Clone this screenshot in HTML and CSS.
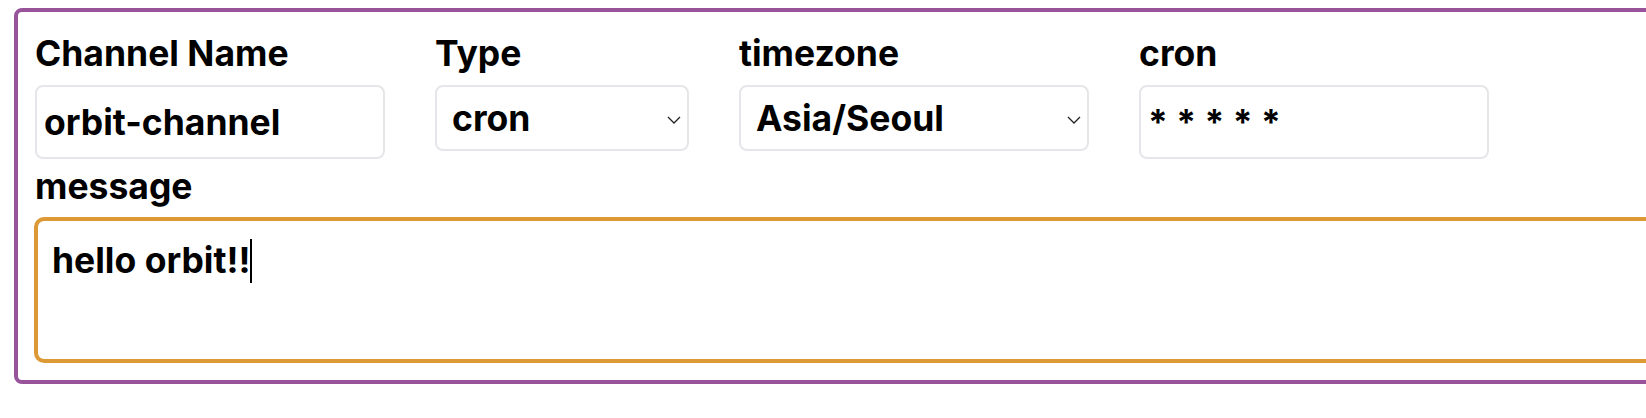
FILE: index.html
```html
<!DOCTYPE html>
<html lang="en">
<head>
<meta charset="utf-8">
<title>Channel form</title>
<link rel="stylesheet" href="styles.css">
</head>
<body>
<form class="card">
  <div class="row">
    <div class="field">
      <label class="label" for="name">Channel Name</label>
      <input class="input" id="name" type="text" value="orbit-channel">
    </div>
    <div class="field">
      <label class="label" for="type">Type</label>
      <div class="select-wrap select-type">
        <select class="select" id="type"><option>cron</option></select>
        <svg class="chevron" viewBox="0 0 14 8" width="14" height="8"><path d="M1 1 L7 7 L13 1" fill="none" stroke="#222" stroke-width="1.3"/></svg>
      </div>
    </div>
    <div class="field">
      <label class="label" for="tz">timezone</label>
      <div class="select-wrap select-tz">
        <select class="select" id="tz"><option>Asia/Seoul</option></select>
        <svg class="chevron" viewBox="0 0 14 8" width="14" height="8"><path d="M1 1 L7 7 L13 1" fill="none" stroke="#222" stroke-width="1.3"/></svg>
      </div>
    </div>
    <div class="field">
      <label class="label" for="cron">cron</label>
      <input class="input" id="cron" type="text" value="* * * * *">
    </div>
  </div>
  <div class="field field-message">
    <label class="label">message</label>
    <div class="textarea"><span class="msg">hello orbit!!</span><span class="caret"></span></div>
  </div>
</form>
</body>
</html>
```

FILE: styles.css
```css
html, body {
  margin: 0;
  padding: 0;
  background: #ffffff;
  overflow: hidden;
}
body {
  font-family: Inter, "Liberation Sans", sans-serif;
  color: #000;
}
.card {
  box-sizing: border-box;
  width: 1700px;
  margin: 8px 0 0 14px;
  border: 4px solid #97549a;
  border-radius: 8px;
  padding: 21px 0 17px 17px;
}
.row {
  display: flex;
  gap: 50px;
  align-items: flex-start;
}
.field {
  display: flex;
  flex-direction: column;
}
.label {
  font-size: 35.5px;
  font-weight: 700;
  line-height: 42px;
  margin-bottom: 10px;
}
.input {
  box-sizing: border-box;
  height: 74px;
  width: 350px;
  border: 2px solid #e6e6ea;
  border-radius: 8px;
  padding: 0 0 0 7px;
  font-family: Inter, "Liberation Sans", sans-serif;
  font-size: 35.5px;
  font-weight: 700;
  color: #000;
  outline: none;
}
.select-wrap {
  position: relative;
}
.select-type { width: 254px; }
.select-tz { width: 350px; }
.select {
  box-sizing: border-box;
  -webkit-appearance: none;
  appearance: none;
  width: 100%;
  height: 66px;
  border: 2px solid #e6e6ea;
  border-radius: 8px;
  background: #fff;
  padding: 0 0 0 15px;
  font-family: Inter, "Liberation Sans", sans-serif;
  font-size: 35.5px;
  font-weight: 700;
  color: #000;
}
.chevron {
  position: absolute;
  right: 8px;
  top: 31px;
}
.field-message {
  margin-top: 7px;
}
.field-message .label {
  margin-bottom: 9px;
}
.textarea {
  box-sizing: border-box;
  height: 146px;
  border: 4px solid #dc9936;
  border-radius: 10px;
  margin-left: -1px;
  padding: 18px 0 0 14px;
  font-size: 35.5px;
  font-weight: 700;
  line-height: 42px;
}
.caret {
  display: inline-block;
  width: 2px;
  height: 44px;
  background: #000;
  vertical-align: -10px;
}
```
